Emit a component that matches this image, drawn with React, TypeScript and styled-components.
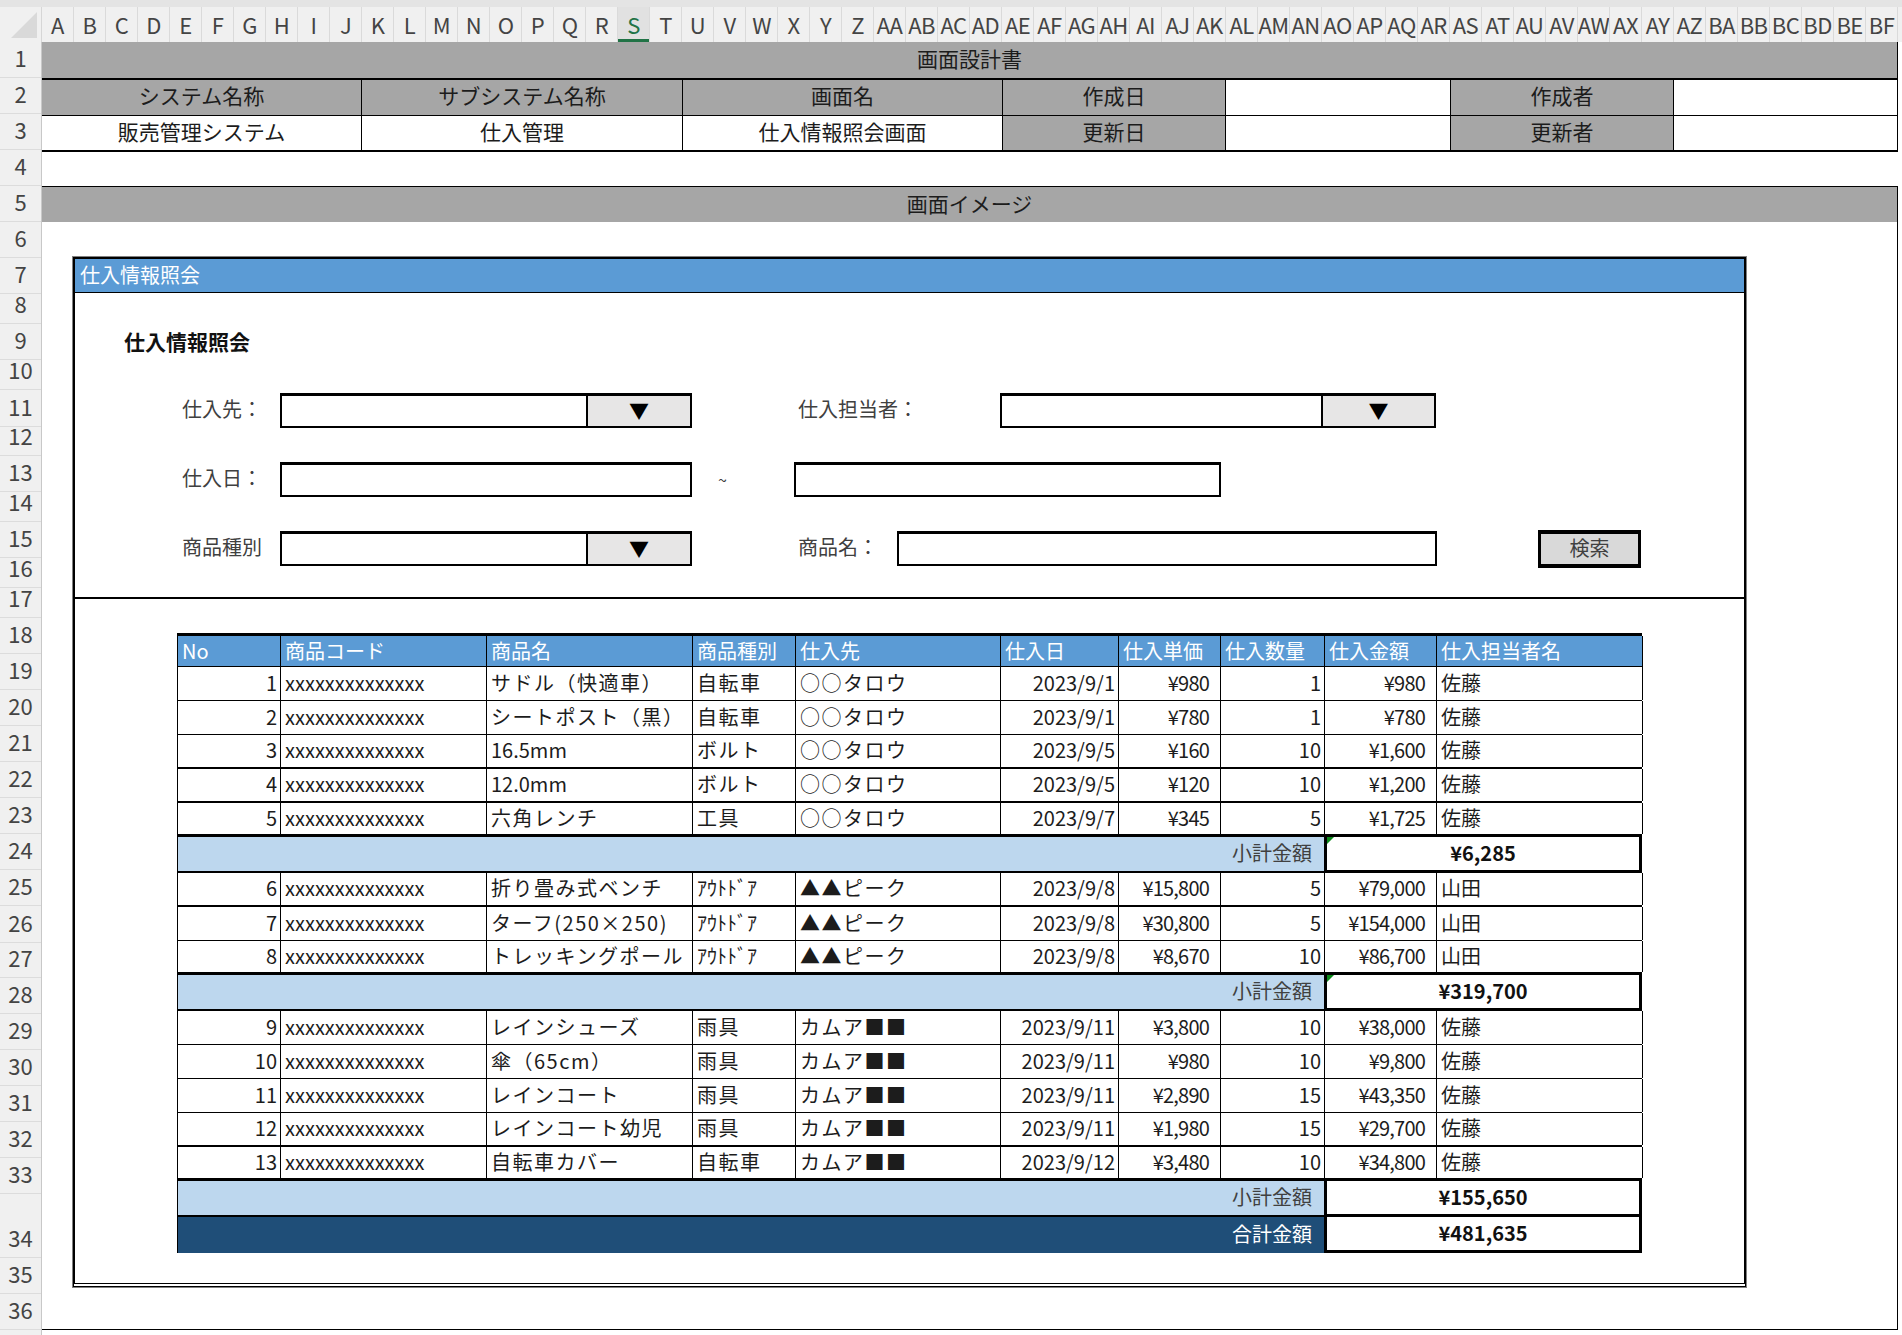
import React from 'react';
import styled, { createGlobalStyle, css } from 'styled-components';

const GlobalStyle = createGlobalStyle`
  html, body { margin: 0; padding: 0; background: #ffffff; }
  body {
    font-family: "Noto Sans CJK JP", "Noto Sans", sans-serif;
    overflow: hidden;
  }
  #root { width: 1902px; height: 1335px; overflow: hidden; }
  * { box-sizing: border-box; }
`;

const FONT = `"Noto Sans CJK JP", "Noto Sans", sans-serif`;

/* ---------- Excel frame ---------- */
const Page = styled.div`
  width: 1902px;
  height: 1335px;
  display: flex;
  flex-direction: column;
  overflow: hidden;
  background: #fff;
  font-family: ${FONT};
`;

const ColHeaderBar = styled.div`
  display: flex;
  height: 42px;
  flex-shrink: 0;
  background: #f0f0f0;
  border-top: 7px solid #e4e4e4;
  overflow: hidden;
`;

const Corner = styled.div`
  width: 42px;
  flex-shrink: 0;
  display: flex;
  align-items: flex-end;
  justify-content: flex-end;
  padding: 0 4px 4px 0;
  border-right: 1px solid #d6d6d6;
`;

const CornerTriangle = styled.div`
  width: 26px;
  height: 26px;
  background: #d9d9d9;
  clip-path: polygon(100% 0, 100% 100%, 0 100%);
`;

const ColCell = styled.div<{ $selected?: boolean }>`
  width: 32px;
  flex-shrink: 0;
  display: flex;
  align-items: center;
  justify-content: center;
  padding-bottom: 2px;
  border-right: 1px solid #dadada;
  font-size: 22px;
  color: #444;
  letter-spacing: -0.6px;
  white-space: nowrap;
  overflow: hidden;
  ${(p) =>
    p.$selected &&
    css`
      background: #e1e1e1;
      color: #217346;
      box-shadow: inset 0 -3px 0 #217346;
    `}
`;

const ColFiller = styled.div`
  flex: 1;
`;

const Body = styled.div`
  display: flex;
  flex: 1;
  min-height: 0;
`;

const RowHeader = styled.div`
  width: 42px;
  flex-shrink: 0;
  background: #f0f0f0;
  border-right: 1px solid #c8c8c8;
  display: flex;
  flex-direction: column;
`;

const RowCell = styled.div<{ $h: number }>`
  height: ${(p) => p.$h}px;
  flex-shrink: 0;
  display: flex;
  align-items: flex-end;
  justify-content: center;
  padding-bottom: 5px;
  border-bottom: 1px solid #dcdcdc;
  font-size: 22px;
  line-height: 30px;
  color: #444;
`;

const Sheet = styled.div`
  width: 1856px;
  display: flex;
  flex-direction: column;
  flex-shrink: 0;
`;

const GreyBar = styled.div<{ $top?: boolean }>`
  height: 36px;
  flex-shrink: 0;
  background: #a6a6a6;
  display: flex;
  align-items: center;
  justify-content: center;
  padding-bottom: 4px;
  font-size: 21px;
  color: #1c1c1c;
  border-right: 1px solid #000;
  ${(p) => p.$top && css`border-top: 1px solid #000;`}
`;

const InfoGrid = styled.div`
  display: grid;
  grid-template-columns: 320px 321px 320px 223px 225px 223px 224px;
  grid-template-rows: 36px 36px;
  border-top: 2px solid #000;
`;

const InfoCell = styled.div<{ $grey?: boolean; $last?: boolean }>`
  display: flex;
  align-items: center;
  justify-content: center;
  padding-bottom: 5px;
  font-size: 21px;
  color: #1c1c1c;
  background: ${(p) => (p.$grey ? '#a6a6a6' : '#ffffff')};
  border-right: 1px solid #000;
  border-bottom: ${(p) => (p.$last ? 2 : 1)}px solid #000;
`;

const EmptyRow = styled.div`
  height: 34px;
  flex-shrink: 0;
`;

const ImageArea = styled.div`
  height: 1108px;
  flex-shrink: 0;
  border-right: 1px solid #000;
  border-bottom: 1px solid #000;
  padding: 35px 0 0 31px;
`;

/* ---------- Window mockup ---------- */
const Window = styled.div`
  width: 1673px;
  height: 1030px;
  border: 2px solid #000;
  border-bottom: 4px double #000;
  box-shadow: 0 0 0 1px #808080;
  display: flex;
  flex-direction: column;
  background: #fff;
`;

const WinTitle = styled.div`
  height: 34px;
  flex-shrink: 0;
  background: #5b9bd5;
  border-bottom: 1px solid #000;
  color: #fff;
  font-size: 20px;
  display: flex;
  align-items: center;
  padding: 0 0 2px 5px;
`;

const FormArea = styled.div`
  height: 306px;
  flex-shrink: 0;
  border-bottom: 2px solid #000;
  padding: 33px 0 0 49px;
`;

const FormHeading = styled.div`
  font-size: 21px;
  font-weight: 700;
  line-height: 30px;
  color: #111;
  margin-bottom: 37px;
`;

const FormRows = styled.div`
  display: flex;
  flex-direction: column;
  gap: 34px;
  margin-left: 58px;
`;

const FormRow = styled.div`
  display: flex;
  align-items: center;
  height: 35px;
`;

const FieldLabel = styled.div<{ $w: number; $ml?: number }>`
  width: ${(p) => p.$w}px;
  margin-left: ${(p) => p.$ml ?? 0}px;
  flex-shrink: 0;
  padding-bottom: 4px;
  font-size: 20px;
  color: #404040;
  white-space: nowrap;
`;

const TextBox = styled.div<{ $w: number }>`
  width: ${(p) => p.$w}px;
  height: 35px;
  flex-shrink: 0;
  border: 2px solid #000;
  border-top-width: 3px;
  background: #fff;
  display: flex;
`;

const DropButton = styled.div<{ $w: number }>`
  width: ${(p) => p.$w}px;
  margin-left: auto;
  background: #e7e6e6;
  border-left: 2px solid #000;
  display: flex;
  align-items: center;
  justify-content: center;
  padding-bottom: 2px;
  font-size: 20px;
  color: #000;
`;

const Tilde = styled.div`
  width: 102px;
  flex-shrink: 0;
  padding: 0 0 2px 26px;
  font-size: 16px;
  color: #404040;
`;

const SearchButton = styled.div`
  width: 103px;
  height: 38px;
  margin-left: 101px;
  flex-shrink: 0;
  background: #d9d9d9;
  border: 3px solid #000;
  border-width: 4px 3px 4px 3px;
  display: flex;
  align-items: center;
  justify-content: center;
  padding-bottom: 3px;
  font-size: 20px;
  color: #404040;
`;

const TableArea = styled.div`
  padding: 34px 0 0 102px;
`;

/* ---------- Data table ---------- */
const COLS = '103px 206px 206px 103px 205px 118px 102px 104px 112px 206px';

const DataTable = styled.div`
  width: 1465px;
  border-left: 1px solid #000;
  display: flex;
  flex-direction: column;
`;

const HeadRow = styled.div`
  display: grid;
  grid-template-columns: ${COLS};
  height: 34px;
  background: #5b9bd5;
  border-top: 3px solid #000;
  border-bottom: 1px solid #000;
`;

const HeadCell = styled.div`
  display: flex;
  align-items: center;
  padding: 0 0 4px 4px;
  border-right: 1px solid #000;
  color: #fff;
  font-size: 20px;
  white-space: nowrap;
`;

const BodyRow = styled.div<{ $bw: number }>`
  display: grid;
  grid-template-columns: ${COLS};
  height: 34px;
  border-bottom: ${(p) => p.$bw}px solid #000;
`;

const Cell = styled.div<{ $right?: boolean; $wide?: boolean; $money?: boolean }>`
  display: flex;
  align-items: center;
  justify-content: ${(p) => (p.$right ? 'flex-end' : 'flex-start')};
  padding: 0 ${(p) => (p.$money ? 11 : p.$right ? 3 : 4)}px 3px ${(p) => (p.$right ? 0 : 4)}px;
  border-right: 1px solid #000;
  font-size: 20px;
  color: #1c1c1c;
  white-space: nowrap;
  overflow: hidden;
  ${(p) => p.$wide && css`letter-spacing: 1.5px;`}
  ${(p) => p.$money && css`letter-spacing: -0.8px;`}
`;

const SumRow = styled.div`
  display: grid;
  grid-template-columns: 1fr 318px;
  height: 36px;
`;

const SumLabel = styled.div<{ $total?: boolean }>`
  display: flex;
  align-items: center;
  justify-content: flex-end;
  padding: 0 12px 4px 0;
  font-size: 20px;
  background: ${(p) => (p.$total ? '#1f4e78' : '#bdd7ee')};
  color: ${(p) => (p.$total ? '#ffffff' : '#404040')};
  border-bottom: ${(p) => (p.$total ? 0 : 2)}px solid #000;
`;

const SumValue = styled.div`
  position: relative;
  display: flex;
  align-items: center;
  justify-content: center;
  padding-bottom: 3px;
  background: #fff;
  border: 3px solid #000;
  border-top: 0;
  font-size: 20px;
  font-weight: 700;
  color: #111;
`;

const ErrorMark = styled.div`
  position: absolute;
  left: 0;
  top: 0;
  width: 7px;
  height: 7px;
  background: #0a8a1a;
  clip-path: polygon(0 0, 100% 0, 0 100%);
`;

/* ---------- data ---------- */
type Item = {
  no: number;
  name: string;
  kind: string;
  supplier: string;
  date: string;
  price: string;
  qty: number;
  amount: string;
  person: string;
  bw: number;
};

const X = 'xxxxxxxxxxxxxx';

const group1: Item[] = [
  { no: 1, name: 'サドル（快適車）', kind: '自転車', supplier: '○○タロウ', date: '2023/9/1', price: '¥980', qty: 1, amount: '¥980', person: '佐藤', bw: 1 },
  { no: 2, name: 'シートポスト（黒）', kind: '自転車', supplier: '○○タロウ', date: '2023/9/1', price: '¥780', qty: 1, amount: '¥780', person: '佐藤', bw: 1 },
  { no: 3, name: '16.5mm', kind: 'ボルト', supplier: '○○タロウ', date: '2023/9/5', price: '¥160', qty: 10, amount: '¥1,600', person: '佐藤', bw: 2 },
  { no: 4, name: '12.0mm', kind: 'ボルト', supplier: '○○タロウ', date: '2023/9/5', price: '¥120', qty: 10, amount: '¥1,200', person: '佐藤', bw: 2 },
  { no: 5, name: '六角レンチ', kind: '工具', supplier: '○○タロウ', date: '2023/9/7', price: '¥345', qty: 5, amount: '¥1,725', person: '佐藤', bw: 3 },
];

const group2: Item[] = [
  { no: 6, name: '折り畳み式ベンチ', kind: 'ｱｳﾄﾄﾞｱ', supplier: '▲▲ピーク', date: '2023/9/8', price: '¥15,800', qty: 5, amount: '¥79,000', person: '山田', bw: 2 },
  { no: 7, name: 'ターフ(250×250)', kind: 'ｱｳﾄﾄﾞｱ', supplier: '▲▲ピーク', date: '2023/9/8', price: '¥30,800', qty: 5, amount: '¥154,000', person: '山田', bw: 1 },
  { no: 8, name: 'トレッキングポール', kind: 'ｱｳﾄﾄﾞｱ', supplier: '▲▲ピーク', date: '2023/9/8', price: '¥8,670', qty: 10, amount: '¥86,700', person: '山田', bw: 3 },
];

const group3: Item[] = [
  { no: 9, name: 'レインシューズ', kind: '雨具', supplier: 'カムア■■', date: '2023/9/11', price: '¥3,800', qty: 10, amount: '¥38,000', person: '佐藤', bw: 1 },
  { no: 10, name: '傘（65cm）', kind: '雨具', supplier: 'カムア■■', date: '2023/9/11', price: '¥980', qty: 10, amount: '¥9,800', person: '佐藤', bw: 1 },
  { no: 11, name: 'レインコート', kind: '雨具', supplier: 'カムア■■', date: '2023/9/11', price: '¥2,890', qty: 15, amount: '¥43,350', person: '佐藤', bw: 1 },
  { no: 12, name: 'レインコート幼児', kind: '雨具', supplier: 'カムア■■', date: '2023/9/11', price: '¥1,980', qty: 15, amount: '¥29,700', person: '佐藤', bw: 2 },
  { no: 13, name: '自転車カバー', kind: '自転車', supplier: 'カムア■■', date: '2023/9/12', price: '¥3,480', qty: 10, amount: '¥34,800', person: '佐藤', bw: 3 },
];

const headers = ['No', '商品コード', '商品名', '商品種別', '仕入先', '仕入日', '仕入単価', '仕入数量', '仕入金額', '仕入担当者名'];

const rowHeights = [36, 36, 36, 36, 36, 36, 36, 30, 36, 30, 37, 29, 36, 30, 36, 30, 30, 36, 36, 36, 36, 36, 36, 36, 36, 37, 35, 36, 36, 36, 36, 36, 36, 64, 36, 36];

function colName(i: number): string {
  let n = i + 1;
  let s = '';
  while (n > 0) {
    const m = (n - 1) % 26;
    s = String.fromCharCode(65 + m) + s;
    n = Math.floor((n - 1) / 26);
  }
  return s;
}

const isWide = (s: string) => /[\u3040-\u30ff\u4e00-\u9fff（）]/.test(s) && !/[ｱ-ﾟ]/.test(s);

const ItemRow: React.FC<{ it: Item }> = ({ it }) => (
  <BodyRow $bw={it.bw}>
    <Cell $right>{it.no}</Cell>
    <Cell>{X}</Cell>
    <Cell $wide={isWide(it.name)}>{it.name}</Cell>
    <Cell $wide={isWide(it.kind)}>{it.kind}</Cell>
    <Cell $wide>{it.supplier}</Cell>
    <Cell $right>{it.date}</Cell>
    <Cell $right $money>{it.price}</Cell>
    <Cell $right>{it.qty}</Cell>
    <Cell $right $money>{it.amount}</Cell>
    <Cell>{it.person}</Cell>
  </BodyRow>
);

const Subtotal: React.FC<{ value: string; mark?: boolean; label?: string; total?: boolean }> = ({ value, mark, label = '小計金額', total }) => (
  <SumRow>
    <SumLabel $total={total}>{label}</SumLabel>
    <SumValue>
      {mark && <ErrorMark />}
      {value}
    </SumValue>
  </SumRow>
);

export default function App() {
  return (
    <Page>
      <GlobalStyle />
      <ColHeaderBar>
        <Corner>
          <CornerTriangle />
        </Corner>
        {Array.from({ length: 58 }, (_, i) => (
          <ColCell key={i} $selected={i === 18}>
            {colName(i)}
          </ColCell>
        ))}
        <ColFiller />
      </ColHeaderBar>
      <Body>
        <RowHeader>
          {rowHeights.map((h, i) => (
            <RowCell key={i} $h={h}>
              {i + 1}
            </RowCell>
          ))}
        </RowHeader>
        <Sheet>
          <GreyBar>画面設計書</GreyBar>
          <InfoGrid>
            <InfoCell $grey>システム名称</InfoCell>
            <InfoCell $grey>サブシステム名称</InfoCell>
            <InfoCell $grey>画面名</InfoCell>
            <InfoCell $grey>作成日</InfoCell>
            <InfoCell />
            <InfoCell $grey>作成者</InfoCell>
            <InfoCell />
            <InfoCell $last>販売管理システム</InfoCell>
            <InfoCell $last>仕入管理</InfoCell>
            <InfoCell $last>仕入情報照会画面</InfoCell>
            <InfoCell $grey $last>更新日</InfoCell>
            <InfoCell $last />
            <InfoCell $grey $last>更新者</InfoCell>
            <InfoCell $last />
          </InfoGrid>
          <EmptyRow />
          <GreyBar $top>画面イメージ</GreyBar>
          <ImageArea>
            <Window>
              <WinTitle>仕入情報照会</WinTitle>
              <FormArea>
                <FormHeading>仕入情報照会</FormHeading>
                <FormRows>
                  <FormRow>
                    <FieldLabel $w={98}>仕入先：</FieldLabel>
                    <TextBox $w={412}>
                      <DropButton $w={104}>▼</DropButton>
                    </TextBox>
                    <FieldLabel $w={202} $ml={106}>仕入担当者：</FieldLabel>
                    <TextBox $w={436}>
                      <DropButton $w={113}>▼</DropButton>
                    </TextBox>
                  </FormRow>
                  <FormRow>
                    <FieldLabel $w={98}>仕入日：</FieldLabel>
                    <TextBox $w={412} />
                    <Tilde>~</Tilde>
                    <TextBox $w={427} />
                  </FormRow>
                  <FormRow>
                    <FieldLabel $w={98}>商品種別</FieldLabel>
                    <TextBox $w={412}>
                      <DropButton $w={104}>▼</DropButton>
                    </TextBox>
                    <FieldLabel $w={99} $ml={106}>商品名：</FieldLabel>
                    <TextBox $w={540} />
                    <SearchButton>検索</SearchButton>
                  </FormRow>
                </FormRows>
              </FormArea>
              <TableArea>
                <DataTable>
                  <HeadRow>
                    {headers.map((h) => (
                      <HeadCell key={h}>{h}</HeadCell>
                    ))}
                  </HeadRow>
                  {group1.map((it) => (
                    <ItemRow key={it.no} it={it} />
                  ))}
                  <Subtotal value="¥6,285" mark />
                  {group2.map((it) => (
                    <ItemRow key={it.no} it={it} />
                  ))}
                  <Subtotal value="¥319,700" mark />
                  {group3.map((it) => (
                    <ItemRow key={it.no} it={it} />
                  ))}
                  <Subtotal value="¥155,650" />
                  <Subtotal value="¥481,635" label="合計金額" total />
                </DataTable>
              </TableArea>
            </Window>
          </ImageArea>
        </Sheet>
      </Body>
    </Page>
  );
}
